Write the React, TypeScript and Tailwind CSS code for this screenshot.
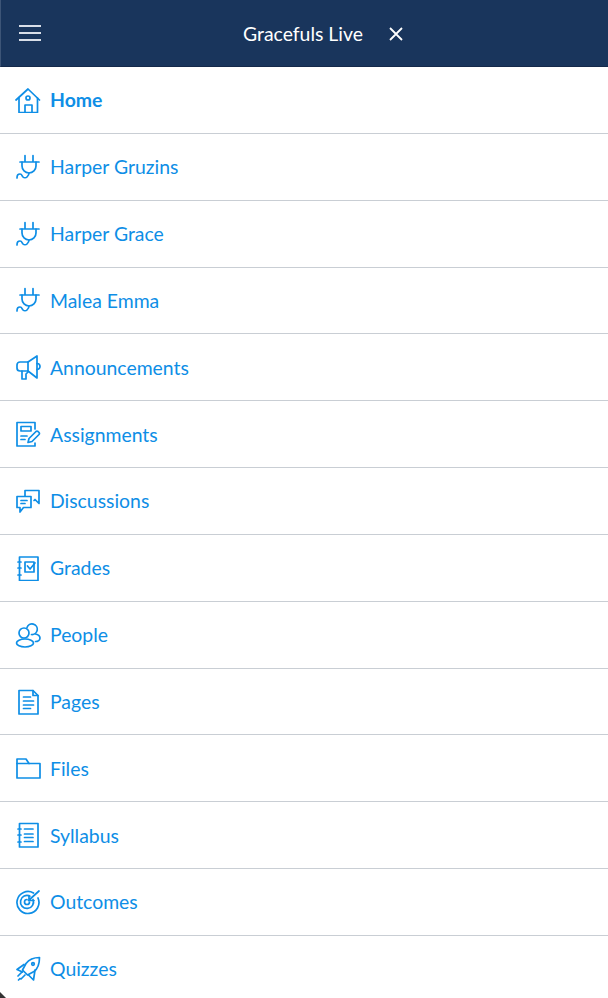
import React from 'react';

const Icon: React.FC<{ children: React.ReactNode }> = ({ children }) => (
  <svg viewBox="0 0 26 26" width="26" height="26" fill="none" stroke="currentColor" strokeWidth="1.7" strokeLinecap="round" strokeLinejoin="round" className="shrink-0">
    {children}
  </svg>
);

const HomeIcon = () => (
  <Icon>
    <path d="M1 13 13 2l11.500 11" />
    <path d="M4 11v14.500h18.500V11" />
    <path d="M10 25.500V18h7v7.500" />
    <circle cx="13" cy="11" r="2" />
  </Icon>
);

const PlugIcon = () => (
  <Icon>
    <path d="M10 1.500V8M18 1.500V8M5 8h19" />
    <path d="M7 8v4a7 7 0 0 0 14 0V8" />
    <path d="M14 19c0 2-1 3-2 4s-3 1-4 0-1-3-3-3-3 1-3 4" />
  </Icon>
);

const MegaphoneIcon = () => (
  <Icon>
    <path d="M13 8H5a3 3 0 0 0-3 3v3a3 3 0 0 0 3 3h8z" />
    <path d="M13 8l9-6v22l-9-7" />
    <path d="M22 9.500a3 3 0 0 1 0 6" />
    <path d="M7 17v8h4v-5l2-2" />
  </Icon>
);

const AssignmentIcon = () => (
  <Icon>
    <path d="M20 8V1.500H2v23.500h18v-3" />
    <path d="M6 5.500h10V10H6zM6 15h6M6 18.500h4" />
    <path d="M13 21.500l1-4 7-7a1.500 1.500 0 0 1 2 0l1 1a1.500 1.500 0 0 1 0 2l-7 7z" />
  </Icon>
);

const DiscussionIcon = () => (
  <Icon>
    <path d="M2 8.500h14v11H8.500L5 24v-4.500H2z" />
    <path d="M10 8V2.500h14v13l-4-4-1 1" />
    <path d="M6 12.500h6M6 15.500h4" />
  </Icon>
);

const GradesIcon = () => (
  <Icon>
    <path d="M4.500 2H23v23.500H4.500z" />
    <path d="M10 7h9v10h-9z" />
    <path d="M12.500 11l2.500 3 5-6" />
    <path d="M3 7h3M3 13h3M3 20h3" />
  </Icon>
);

const PeopleIcon = () => (
  <Icon>
    <circle cx="9" cy="11" r="5" />
    <path d="M12 5.500a5.300 5.300 0 1 1 4.500 7" />
    <ellipse cx="10" cy="21" rx="8.500" ry="4" />
    <path d="M20.500 12c2 .5 4.500 2 4.500 4s-2 3.500-4.500 3.500" />
  </Icon>
);

const PageIcon = () => (
  <Icon>
    <path d="M4 1.500h14l5 5V25H4z" />
    <path d="M18 1.500v5h5" />
    <path d="M8.500 8h7M8.500 12h10M8.500 16h10M8.500 19.500h7" />
  </Icon>
);

const FolderIcon = () => (
  <Icon>
    <path d="M2 4h9l3 4.500h11V23H2z" />
    <path d="M2 8.500h12" />
  </Icon>
);

const SyllabusIcon = () => (
  <Icon>
    <path d="M4.500 1.500H23V25H4.500z" />
    <path d="M3 7h3M3 13h3M3 20h3" />
    <path d="M9.500 7h8.500M9.500 12h8.500M9.500 15.500h8.500M9.500 19.500h8.500" />
  </Icon>
);

const OutcomesIcon = () => (
  <Icon>
    <path d="M18.500 4a11 11 0 1 0 4.500 5" />
    <path d="M15 7.200a6.500 6.500 0 1 0 3 3.300" />
    <path d="M12 10.500a2.500 2.500 0 1 0 2.500 2.500" />
    <path d="M13.500 11.500 24 2M14 6.500v5h5" />
  </Icon>
);

const RocketIcon = () => (
  <Icon>
    <path d="M24.500 1.500c-5.500 0-10.500 2-13.500 6l-3.500 6.500 5 5 6.500-3.500c4-3 5.500-8.500 5.500-14z" />
    <circle cx="18" cy="8" r="1.300" />
    <path d="M9 8.500l-7 5 5.500 2.500M20 14l-1.500 10-5-5" />
    <path d="M3 20l4-4M6 23l4-4M3.500 24l1.500-1.500" />
  </Icon>
);

const items = [
  { label: 'Home', icon: <HomeIcon />, bold: true },
  { label: 'Harper Gruzins', icon: <PlugIcon /> },
  { label: 'Harper Grace', icon: <PlugIcon /> },
  { label: 'Malea Emma', icon: <PlugIcon /> },
  { label: 'Announcements', icon: <MegaphoneIcon /> },
  { label: 'Assignments', icon: <AssignmentIcon /> },
  { label: 'Discussions', icon: <DiscussionIcon /> },
  { label: 'Grades', icon: <GradesIcon /> },
  { label: 'People', icon: <PeopleIcon /> },
  { label: 'Pages', icon: <PageIcon /> },
  { label: 'Files', icon: <FolderIcon /> },
  { label: 'Syllabus', icon: <SyllabusIcon /> },
  { label: 'Outcomes', icon: <OutcomesIcon /> },
  { label: 'Quizzes', icon: <RocketIcon /> },
];

export default function App() {
  return (
    <div className="relative w-[608px] h-[998px] overflow-hidden bg-white font-['Lato',sans-serif]">
      <header className="relative h-[67px] bg-[#19355c] border-b border-l border-b-[#14294a] border-l-[#3d5577] flex items-center justify-center pr-[3px] pt-[1px] text-white">
        <button className="absolute left-[18px] top-[25px] flex flex-col gap-[5px]">
          <span className="block w-[22px] h-[2px] bg-[#d8dee8]"></span>
          <span className="block w-[22px] h-[2px] bg-[#d8dee8]"></span>
          <span className="block w-[22px] h-[2px] bg-[#d8dee8]"></span>
        </button>
        <span className="text-[19.4px]">Gracefuls Live</span>
        <svg viewBox="0 0 14 14" width="14" height="14" stroke="currentColor" strokeWidth="1.8" className="absolute left-[388px] top-[27px]">
          <path d="M1 1l12 12M13 1 1 13" />
        </svg>
      </header>
      <nav>
        {items.map((item) => (
          <a key={item.label} className="h-[66.85px] flex items-center gap-[9px] pl-[15px] border-b border-[#c9ced4] text-[#0e8ee6]">
            {item.icon}
            <span className={item.bold ? 'text-[19.4px] font-bold' : 'text-[19.4px]'}>{item.label}</span>
          </a>
        ))}
      </nav>
      {/* corner of whatever sits behind the rounded page */}
      <svg viewBox="0 0 6 6" width="6" height="6" className="absolute left-0 bottom-0">
        <path d="M0 0 6 6H0z" fill="#333" />
      </svg>
    </div>
  );
}
